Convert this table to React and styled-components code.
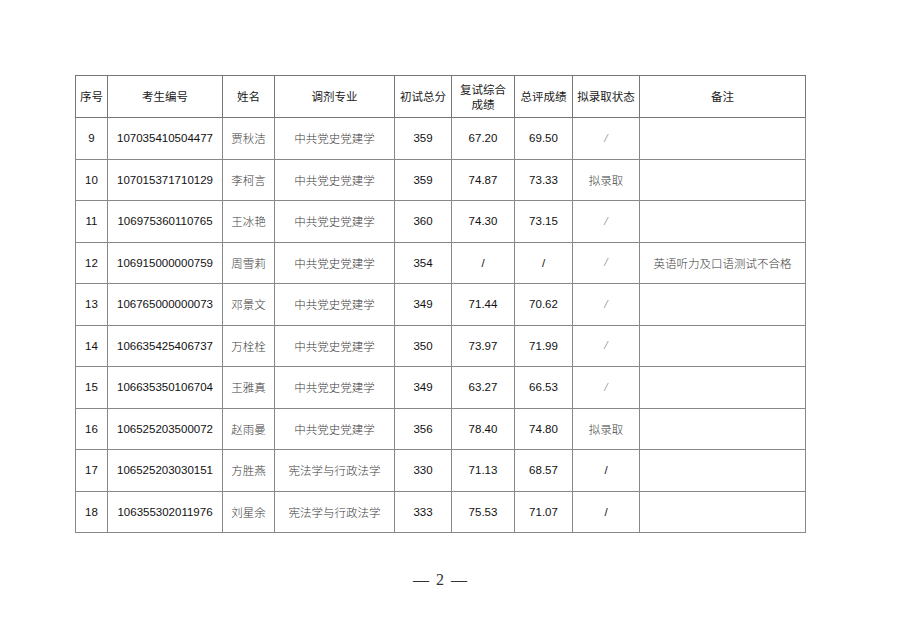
import React from 'react'
import styled, { createGlobalStyle } from 'styled-components'

const GlobalStyle = createGlobalStyle`
  html, body {
    margin: 0;
    padding: 0;
    background: #fff;
  }
  body {
    font-family: "Liberation Sans", "Noto Sans CJK SC", sans-serif;
    color: #1a1a1a;
  }
`

const Page = styled.div`
  width: 900px;
  height: 636px;
  box-sizing: border-box;
  padding: 75px 0 0 75px;
  display: flex;
  flex-direction: column;
`

const Table = styled.table`
  width: 730px;
  table-layout: fixed;
  border-collapse: collapse;
  border: 1px solid #555;
`

const Th = styled.th`
  height: 41px;
  padding: 0 2px;
  border: 1px solid #777;
  font-family: "Noto Sans CJK SC", sans-serif;
  font-weight: 400;
  font-size: 11.5px;
  line-height: 15px;
  color: #1a1a1a;
  text-align: center;
  vertical-align: middle;
`

const Td = styled.td`
  height: 40.5px;
  padding: 0 2px;
  border: 1px solid #888;
  font-family: ${p => p.$serif ? '"Noto Sans CJK SC", sans-serif' : '"Liberation Sans", Arial, sans-serif'};
  font-size: 11.5px;
  color: ${p => p.$serif ? '#3c3c3c' : '#111'};
  font-weight: ${p => p.$serif ? 300 : 400};
  text-align: center;
  vertical-align: middle;
  white-space: nowrap;
`

const ThinSlash = styled.span`
  font-family: "Liberation Serif", serif;
  font-style: italic;
  font-size: 12px;
  color: #777;
`

const Footer = styled.div`
  width: 730px;
  margin-top: 38px;
  text-align: center;
  font-family: "Liberation Serif", "DejaVu Serif", serif;
  font-size: 16px;
  color: #333;
  word-spacing: 3px;
`

const widths = [32, 115, 52, 120, 57, 63, 58, 67, 166]

const headers = ['序号', '考生编号', '姓名', '调剂专业', '初试总分', '复试综合成绩', '总评成绩', '拟录取状态', '备注']

const rows = [
  ['9', '107035410504477', '贾秋洁', '中共党史党建学', '359', '67.20', '69.50', 'thin', ''],
  ['10', '107015371710129', '李柯言', '中共党史党建学', '359', '74.87', '73.33', '拟录取', ''],
  ['11', '106975360110765', '王冰艳', '中共党史党建学', '360', '74.30', '73.15', 'thin', ''],
  ['12', '106915000000759', '周雪莉', '中共党史党建学', '354', '/', '/', 'thin', '英语听力及口语测试不合格'],
  ['13', '106765000000073', '邓景文', '中共党史党建学', '349', '71.44', '70.62', 'thin', ''],
  ['14', '106635425406737', '万栓栓', '中共党史党建学', '350', '73.97', '71.99', 'thin', ''],
  ['15', '106635350106704', '王雅真', '中共党史党建学', '349', '63.27', '66.53', 'thin', ''],
  ['16', '106525203500072', '赵雨曼', '中共党史党建学', '356', '78.40', '74.80', '拟录取', ''],
  ['17', '106525203030151', '方胜燕', '宪法学与行政法学', '330', '71.13', '68.57', '/', ''],
  ['18', '106355302011976', '刘星余', '宪法学与行政法学', '333', '75.53', '71.07', '/', ''],
]

const serifCols = [2, 3, 8]

function StatusCell({ value }) {
  if (value === 'thin') return <Td><ThinSlash>/</ThinSlash></Td>
  if (value === '拟录取') return <Td $serif>{value}</Td>
  return <Td>{value}</Td>
}

export default function App() {
  return (
    <>
      <GlobalStyle />
      <Page>
        <Table>
          <colgroup>
            {widths.map((w, i) => <col key={i} style={{ width: w }} />)}
          </colgroup>
          <thead>
            <tr>
              {headers.map((h, i) => (
                <Th key={i}>{i === 5 ? <>复试综合<br />成绩</> : h}</Th>
              ))}
            </tr>
          </thead>
          <tbody>
            {rows.map(r => (
              <tr key={r[0]}>
                {r.map((v, i) => i === 7
                  ? <StatusCell key={i} value={v} />
                  : <Td key={i} $serif={serifCols.includes(i)}>{v}</Td>
                )}
              </tr>
            ))}
          </tbody>
        </Table>
        <Footer>— 2 —</Footer>
      </Page>
    </>
  )
}
